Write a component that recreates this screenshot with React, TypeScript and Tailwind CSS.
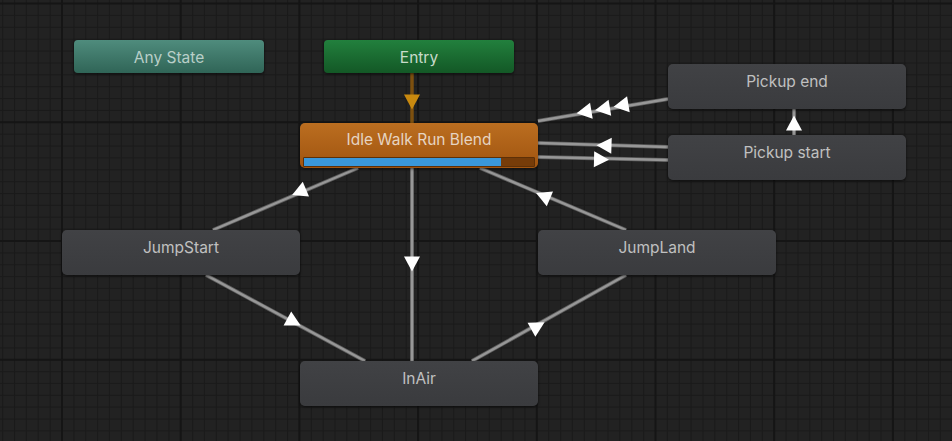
import React from "react";

type Pt = [number, number];

function tri(cx: number, cy: number, dx: number, dy: number, L = 15, W = 16): string {
  const len = Math.hypot(dx, dy);
  const ux = dx / len;
  const uy = dy / len;
  const nx = -uy;
  const ny = ux;
  const tip: Pt = [cx + (ux * L) / 2, cy + (uy * L) / 2];
  const b1: Pt = [cx - (ux * L) / 2 + (nx * W) / 2, cy - (uy * L) / 2 + (ny * W) / 2];
  const b2: Pt = [cx - (ux * L) / 2 - (nx * W) / 2, cy - (uy * L) / 2 - (ny * W) / 2];
  return [tip, b1, b2].map((p) => p.join(",")).join(" ");
}

function Grid() {
  const minor = 118.7 / 10;
  const xs: { v: number; major: boolean }[] = [];
  for (let i = -10; i < 90; i++) {
    const v = 62 + i * minor;
    if (v < -2 || v > 956) continue;
    xs.push({ v, major: i % 10 === 0 });
  }
  const ys: { v: number; major: boolean }[] = [];
  for (let i = -10; i < 50; i++) {
    const v = 3.6 + i * minor;
    if (v < -2 || v > 445) continue;
    ys.push({ v, major: i % 10 === 0 });
  }
  return (
    <svg className="absolute inset-0" width={952} height={441}>
      {xs.filter((l) => !l.major).map((l, i) => (
        <line key={"x" + i} x1={l.v} y1={0} x2={l.v} y2={441} stroke="#1b1b1b" strokeWidth={1} />
      ))}
      {ys.filter((l) => !l.major).map((l, i) => (
        <line key={"y" + i} x1={0} y1={l.v} x2={952} y2={l.v} stroke="#1b1b1b" strokeWidth={1} />
      ))}
      {xs.filter((l) => l.major).map((l, i) => (
        <line key={"X" + i} x1={l.v} y1={0} x2={l.v} y2={441} stroke="#151515" strokeWidth={2} />
      ))}
      {ys.filter((l) => l.major).map((l, i) => (
        <line key={"Y" + i} x1={0} y1={l.v} x2={952} y2={l.v} stroke="#151515" strokeWidth={2} />
      ))}
    </svg>
  );
}

function Edges() {
  const lines: [number, number, number, number][] = [
    [358, 168, 213, 230],
    [206, 275, 365, 361],
    [412, 168, 412, 361],
    [480, 168, 626, 230],
    [472, 361, 626, 275],
    [538, 121, 668, 99],
    [538, 143, 668, 147],
    [538, 157, 668, 160],
    [794, 135, 794, 109],
  ];
  const arrows: [number, number, number, number][] = [
    [299, 192, -145, 62],
    [294, 322, 159, 86],
    [412, 264, 0, 1],
    [543, 196, -146, -62],
    [538, 326, 154, -86],
    [584, 112, -130, 22],
    [602.5, 109, -130, 22],
    [621, 105.5, -130, 22],
    [604, 145.5, -130, -4],
    [601.5, 159.5, 130, 3],
    [794, 123, 0, -1],
  ];
  return (
    <svg className="absolute inset-0" width={952} height={441}>
      {lines.map(([a, b, c, d], i) => (
        <g key={i}>
          <line x1={a} y1={b} x2={c} y2={d} stroke="#5e5e5e" strokeWidth={4} strokeLinecap="butt" />
          <line x1={a} y1={b} x2={c} y2={d} stroke="#979797" strokeWidth={2.4} strokeLinecap="butt" />
        </g>
      ))}
      <line x1={412} y1={73} x2={412} y2={123} stroke="#7d500f" strokeWidth={3.5} />
      <polygon points={tri(412, 102, 0, 1)} fill="#c8890f" />
      {arrows.map(([x, y, dx, dy], i) => (
        <polygon key={i} points={tri(x, y, dx, dy)} fill="#ffffff" />
      ))}
    </svg>
  );
}

function GrayNode({ x, y, label }: { x: number; y: number; label: string }) {
  return (
    <div
      className="absolute w-[238px] h-[45px] rounded-[5px] bg-gradient-to-b from-[#414245] to-[#3a3b3e] shadow-[0_1px_3px_rgba(0,0,0,0.6)] text-center pt-[8px] text-[15.5px] leading-[20px] text-[#c0c0c0]"
      style={{ left: x, top: y }}
    >
      {label}
    </div>
  );
}

export default function App() {
  return (
    <div className="relative w-[952px] h-[441px] overflow-hidden bg-[#222222] font-['Inter',sans-serif]">
      <Grid />
      <Edges />
      <div className="absolute left-[74px] top-[40px] w-[190px] h-[33px] rounded-[4px] bg-gradient-to-b from-[#4f8c7d] to-[#306557] shadow-[0_1px_3px_rgba(0,0,0,0.6)] flex items-center justify-center pt-[3px] text-[15.5px] text-[#b9cfc8]">
        Any State
      </div>
      <div className="absolute left-[324px] top-[40px] w-[190px] h-[33px] rounded-[4px] bg-gradient-to-b from-[#22803d] to-[#135826] shadow-[0_1px_3px_rgba(0,0,0,0.6)] flex items-center justify-center pt-[3px] text-[15.5px] text-[#c8dbcb]">
        Entry
      </div>
      <div className="absolute left-[300px] top-[123px] w-[238px] h-[45px] rounded-[5px] bg-gradient-to-b from-[#bb6e20] to-[#a0540f] shadow-[0_1px_3px_rgba(0,0,0,0.6)] flex flex-col items-stretch">
        <div className="pt-[7px] h-[34px] text-center text-[15.5px] leading-[20px] text-[#e6d4c2]">Idle Walk Run Blend</div>
        <div className="mx-[3px] h-[10px] bg-[#763c09] border border-[#5e3007] rounded-[1px] flex">
          <div className="w-[197px] h-full bg-[#3a97d9]" />
        </div>
      </div>
      <GrayNode x={668} y={64} label="Pickup end" />
      <GrayNode x={668} y={135} label="Pickup start" />
      <GrayNode x={62} y={230} label="JumpStart" />
      <GrayNode x={538} y={230} label="JumpLand" />
      <GrayNode x={300} y={361} label="InAir" />
    </div>
  );
}
